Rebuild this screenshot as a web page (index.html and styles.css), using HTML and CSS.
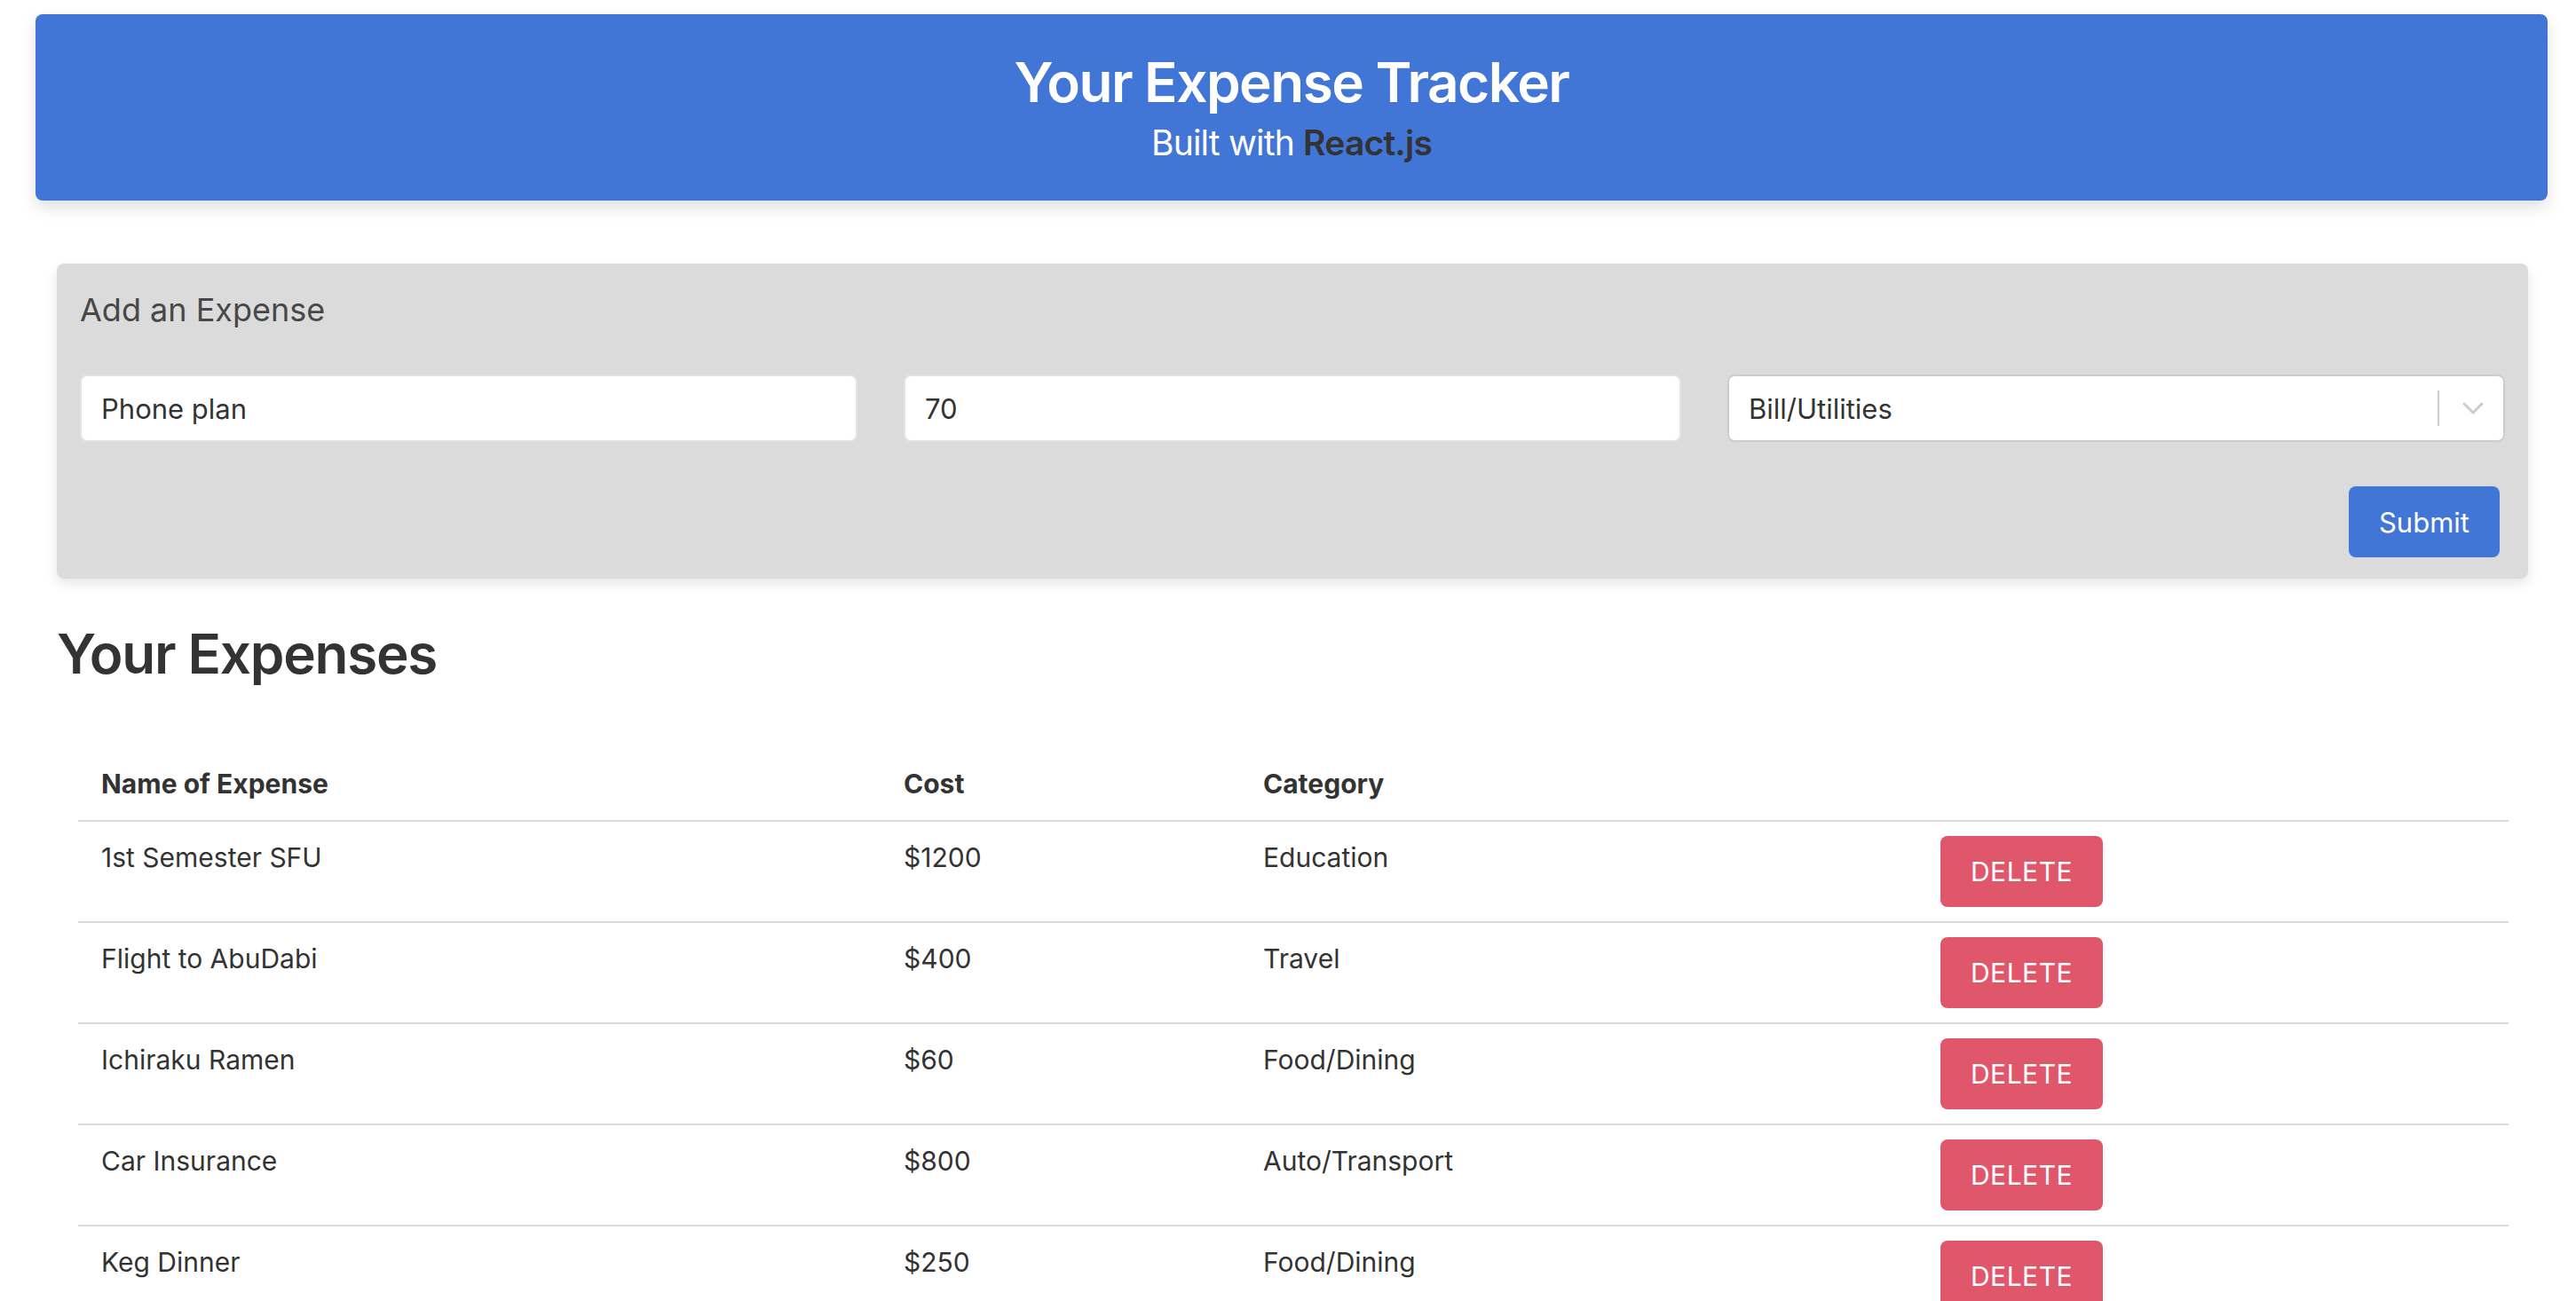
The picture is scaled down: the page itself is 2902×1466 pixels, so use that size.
FILE: index.html
```html
<!DOCTYPE html>
<html lang="en">
<head>
<meta charset="utf-8">
<title>Your Expense Tracker</title>
<link rel="stylesheet" href="styles.css">
</head>
<body>
<header class="banner">
  <h1 class="banner-title">Your Expense Tracker</h1>
  <p class="banner-sub">Built with <strong>React.js</strong></p>
</header>

<main class="page">
  <section class="form-card">
    <h2 class="form-title">Add an Expense</h2>
    <div class="form-row">
      <div class="field">Phone plan</div>
      <div class="field">70</div>
      <div class="field select">
        <span class="select-value">Bill/Utilities</span>
        <span class="select-sep"></span>
        <svg class="chevron" width="24" height="14" viewBox="0 0 24 14"><path d="M2 2 L12 12 L22 2" fill="none" stroke="#cccccc" stroke-width="3" stroke-linecap="round" stroke-linejoin="round"/></svg>
      </div>
    </div>
    <div class="form-actions">
      <button class="btn-submit">Submit</button>
    </div>
  </section>

  <h2 class="list-title">Your Expenses</h2>

  <table class="expenses">
    <colgroup>
      <col class="c-name"><col class="c-cost"><col class="c-cat"><col class="c-act">
    </colgroup>
    <thead>
      <tr><th>Name of Expense</th><th>Cost</th><th>Category</th><th></th></tr>
    </thead>
    <tbody>
      <tr><td>1st Semester SFU</td><td>$1200</td><td>Education</td><td><button class="btn-delete">Delete</button></td></tr>
      <tr><td>Flight to AbuDabi</td><td>$400</td><td>Travel</td><td><button class="btn-delete">Delete</button></td></tr>
      <tr><td>Ichiraku Ramen</td><td>$60</td><td>Food/Dining</td><td><button class="btn-delete">Delete</button></td></tr>
      <tr><td>Car Insurance</td><td>$800</td><td>Auto/Transport</td><td><button class="btn-delete">Delete</button></td></tr>
      <tr><td>Keg Dinner</td><td>$250</td><td>Food/Dining</td><td><button class="btn-delete">Delete</button></td></tr>
    </tbody>
  </table>
</main>
</body>
</html>
```

FILE: styles.css
```css
* { box-sizing: border-box; }

html, body {
  margin: 0;
  padding: 0;
  background: #ffffff;
  color: #333333;
  font-family: Inter, "Noto Sans", Roboto, sans-serif;
}

body { overflow: hidden; }

.banner {
  margin: 16px 0 0 40px;
  width: 2830px;
  height: 210px;
  padding-top: 38px;
  background: #4176d6;
  border-radius: 8px;
  box-shadow: 0 8px 18px rgba(0, 0, 0, 0.12);
  text-align: center;
  color: #ffffff;
}

.banner-title {
  margin: 0;
  font-size: 62px;
  line-height: 77px;
  font-weight: 600;
  letter-spacing: -1.5px;
}

.banner-sub {
  margin: 6px 0 0;
  font-size: 39px;
  line-height: 48px;
  font-weight: 400;
  letter-spacing: -0.8px;
}

.banner-sub strong {
  color: #333333;
  font-weight: 600;
}

.page {
  padding-left: 64px;
  width: 2848px;
}

.form-card {
  margin-top: 71px;
  width: 2784px;
  background: #dbdbdb;
  border-radius: 8px;
  box-shadow: 0 6px 14px rgba(0, 0, 0, 0.1);
  padding: 26px 26px 24px;
}

.form-title {
  margin: 0;
  font-size: 36px;
  line-height: 52px;
  font-weight: 400;
  color: #484848;
}

.form-row {
  margin-top: 47px;
  display: grid;
  grid-template-columns: repeat(3, 1fr);
  column-gap: 52px;
}

.field {
  height: 76px;
  background: #ffffff;
  border-radius: 8px;
  border: 2px solid #e3e3e3;
  padding: 0 22px;
  display: flex;
  align-items: center;
  font-size: 31px;
  color: #333333;
}

.field.select {
  border-color: #cccccc;
  padding-right: 22px;
}

.select-value { flex: 1; }

.select-sep {
  width: 2px;
  height: 40px;
  background: #cccccc;
  margin-right: 26px;
}

.chevron { display: block; }

.form-actions {
  margin-top: 50px;
  display: flex;
  justify-content: flex-end;
  padding-right: 6px;
}

.btn-submit {
  width: 170px;
  height: 80px;
  border: none;
  border-radius: 8px;
  background: #4176d6;
  color: #ffffff;
  font-family: inherit;
  font-size: 31px;
  font-weight: 400;
}

.list-title {
  margin: 48px 0 0 0;
  font-size: 62px;
  line-height: 74px;
  font-weight: 600;
  color: #333333;
  letter-spacing: -1.3px;
}

.expenses {
  margin: 68px 0 0 24px;
  width: 2738px;
  table-layout: fixed;
  border-collapse: collapse;
  font-size: 30px;
  color: #333333;
}

.c-name { width: 904px; }
.c-cost { width: 405px; }
.c-cat { width: 763px; }
.c-act { width: 666px; }

.expenses th,
.expenses td {
  text-align: left;
  vertical-align: top;
  padding: 16px 26px;
  line-height: 48px;
}

.expenses th {
  font-weight: 700;
  padding-top: 17px;
  padding-bottom: 17px;
  border-bottom: 2px solid #dadada;
}

.expenses td {
  border-top: 2px solid #dadada;
}

.expenses tbody tr:first-child td { border-top: none; }

.btn-delete {
  display: block;
  width: 183px;
  height: 80px;
  border: none;
  border-radius: 8px;
  background: #e0566b;
  color: #ffffff;
  font-family: inherit;
  font-size: 30px;
  text-transform: uppercase;
  letter-spacing: 0.5px;
}
```
